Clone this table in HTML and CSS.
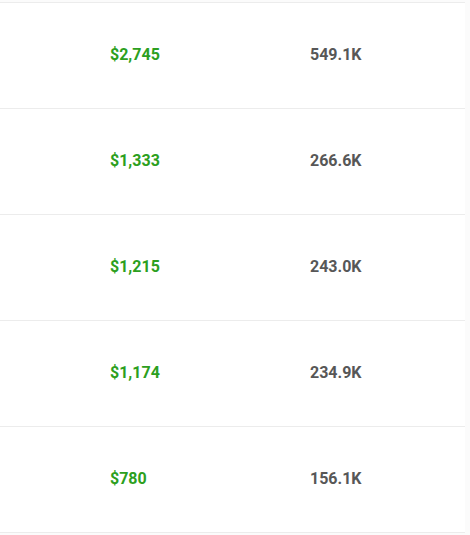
FILE: index.html
```html
<!DOCTYPE html>
<html lang="en">
<head>
    <meta charset="UTF-8">
    <meta name="viewport" content="width=device-width, initial-scale=1.0">
    <title>Earnings</title>
    <link rel="stylesheet" href="styles.css">
</head>
<body>
    <div class="table">
        <div class="row">
            <div class="cell"></div>
            <div class="cell earn">$2,745</div>
            <div class="cell views">549.1K</div>
        </div>
        <div class="row">
            <div class="cell"></div>
            <div class="cell earn">$1,333</div>
            <div class="cell views">266.6K</div>
        </div>
        <div class="row">
            <div class="cell"></div>
            <div class="cell earn">$1,215</div>
            <div class="cell views">243.0K</div>
        </div>
        <div class="row">
            <div class="cell"></div>
            <div class="cell earn">$1,174</div>
            <div class="cell views">234.9K</div>
        </div>
        <div class="row">
            <div class="cell"></div>
            <div class="cell earn">$780</div>
            <div class="cell views">156.1K</div>
        </div>
    </div>
</body>
</html>
```

FILE: styles.css
```css
body {
    margin: 0;
    background-color: #fbfbfb;
    font-family: Roboto, "Liberation Sans", sans-serif;
}

.table {
    width: 465px;
    margin-top: 2px;
    background-color: #fff;
    border-bottom: 1px solid #ececec;
}

.row {
    display: grid;
    grid-template-columns: 110px 200px 1fr;
    align-items: center;
    height: 105px;
    box-sizing: content-box;
    padding-bottom: 0;
    border-top: 1px solid #ececec;
}

.cell {
    font-size: 16px;
    font-weight: 700;
    margin-bottom: 2px;
}

.earn {
    color: #2c9f20;
}

.views {
    color: #575757;
}
```
